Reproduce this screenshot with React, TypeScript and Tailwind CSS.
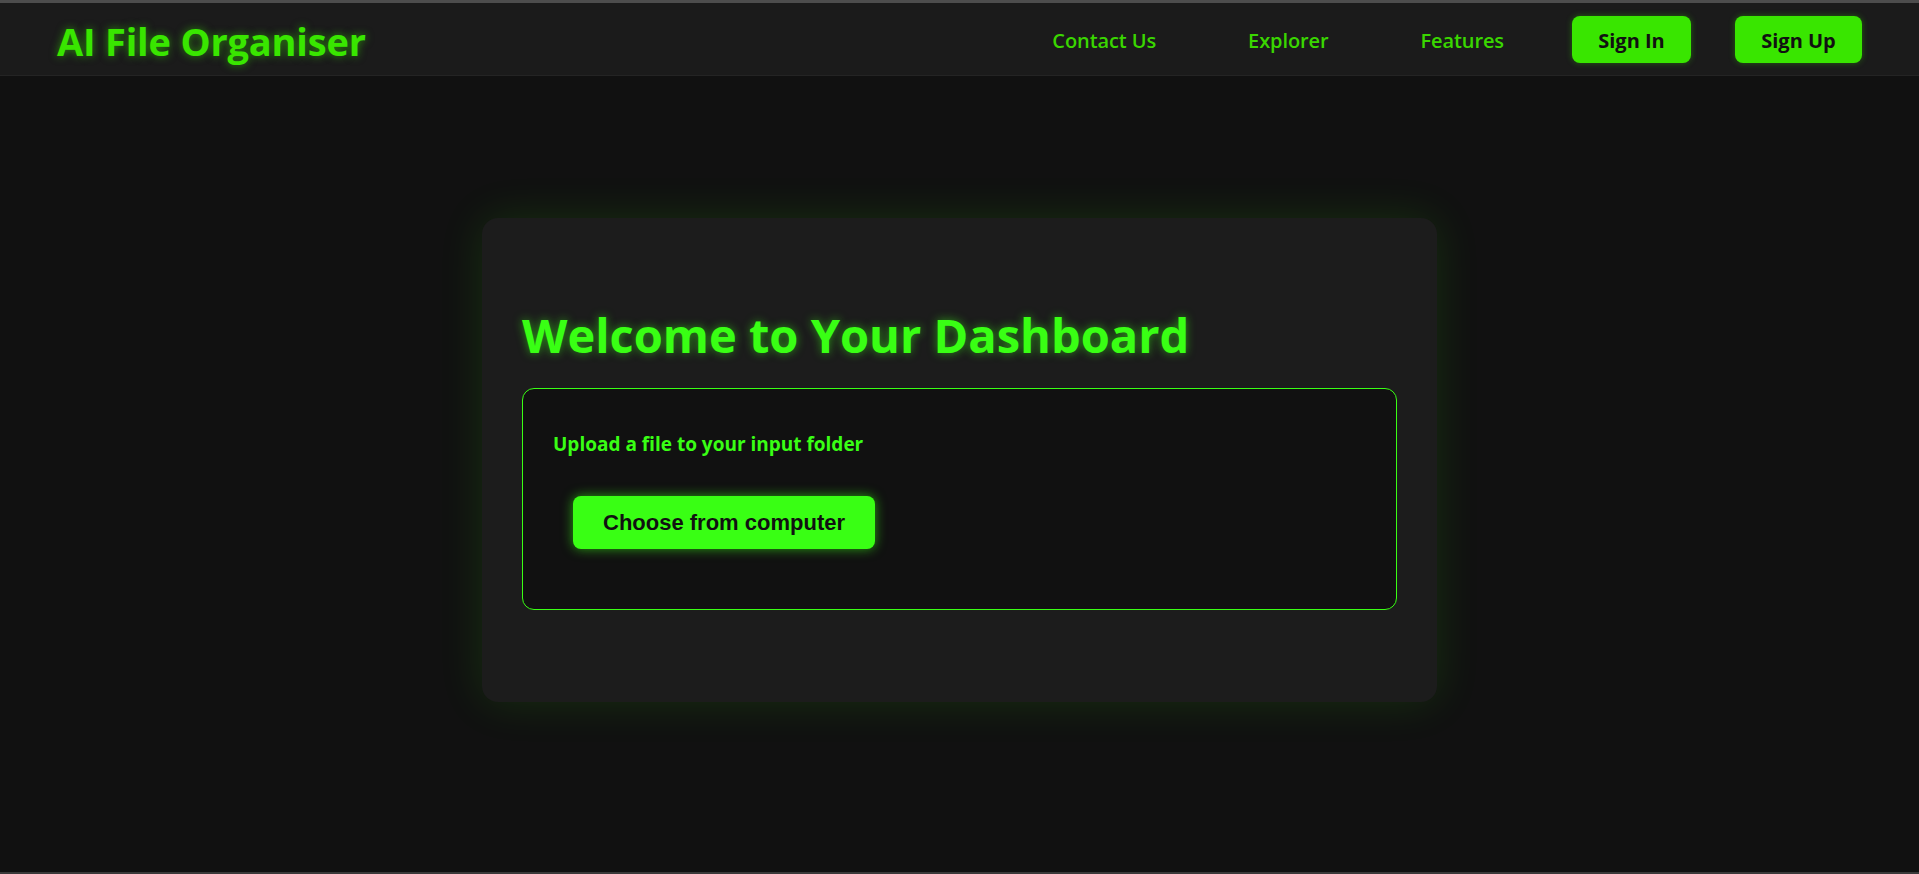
import { useRef } from 'react';

const navLinks = ['Contact Us', 'Explorer', 'Features'];

export default function App() {
    const fileInput = useRef<HTMLInputElement>(null);

    return (
        <div
            className="h-[874px] bg-[#111111] border-t-[3px] border-t-[#4d4d4d] border-b-2 border-b-[#3a3a3a] flex flex-col overflow-hidden"
            style={{ fontFamily: '"Open Sans", "Noto Sans", sans-serif' }}
        >
            {/* top bar */}
            <header className="h-[73px] shrink-0 bg-[#1b1b1b] border-b border-[#242424] flex items-center justify-between pl-[57px] pr-[57px]">
                <h1 className="pt-[5px] text-[38px] font-bold tracking-[-0.2px] text-[#39e600] [text-shadow:0_0_8px_rgba(57,230,0,0.55)]">
                    AI File Organiser
                </h1>

                <nav className="flex items-center gap-[44px]">
                    {navLinks.map((link) => (
                        <a key={link} href="#" className="px-[24px] pt-[4px] text-[20px] font-semibold tracking-[-0.1px] text-[#3ad600]">
                            {link}
                        </a>
                    ))}
                    <button className="h-[47px] w-[119px] rounded-lg bg-[#39e600] pt-[4px] text-[20px] font-bold text-[#111] shadow-[0_0_6px_rgba(57,230,0,0.35)]">
                        Sign In
                    </button>
                    <button className="h-[47px] w-[127px] rounded-lg bg-[#39e600] pt-[4px] text-[20px] font-bold text-[#111] shadow-[0_0_6px_rgba(57,230,0,0.35)]">
                        Sign Up
                    </button>
                </nav>
            </header>

            {/* dashboard card */}
            <main className="flex justify-center pt-[142px]">
                <div className="w-[955px] h-[484px] rounded-2xl bg-[#1c1c1c] px-[40px] pt-[89px] shadow-[0_0_45px_rgba(57,255,20,0.12)]">
                    <h2 className="text-[47px] leading-[56px] font-bold text-[#39ff14] [text-shadow:0_0_10px_rgba(57,255,20,0.55)]">
                        Welcome to Your Dashboard
                    </h2>

                    <div className="mt-[25px] h-[222px] rounded-xl border border-[#39ff14] bg-[#111111] pl-[30px] pt-[42px]">
                        <p className="text-[19px] leading-[26px] font-bold text-[#39ff14]">
                            Upload a file to your input folder
                        </p>
                        <input ref={fileInput} type="file" className="hidden" />
                        <button
                            onClick={() => fileInput.current?.click()}
                            className="mt-[39px] ml-[20px] rounded-lg bg-[#39ff14] px-[30px] py-[14px] text-[22px] leading-[25px] font-bold text-[#111] shadow-[0_0_12px_rgba(57,255,20,0.6)]"
                            style={{ fontFamily: '"Liberation Sans", Arial, sans-serif' }}
                        >
                            Choose from computer
                        </button>
                    </div>
                </div>
            </main>
        </div>
    );
}
